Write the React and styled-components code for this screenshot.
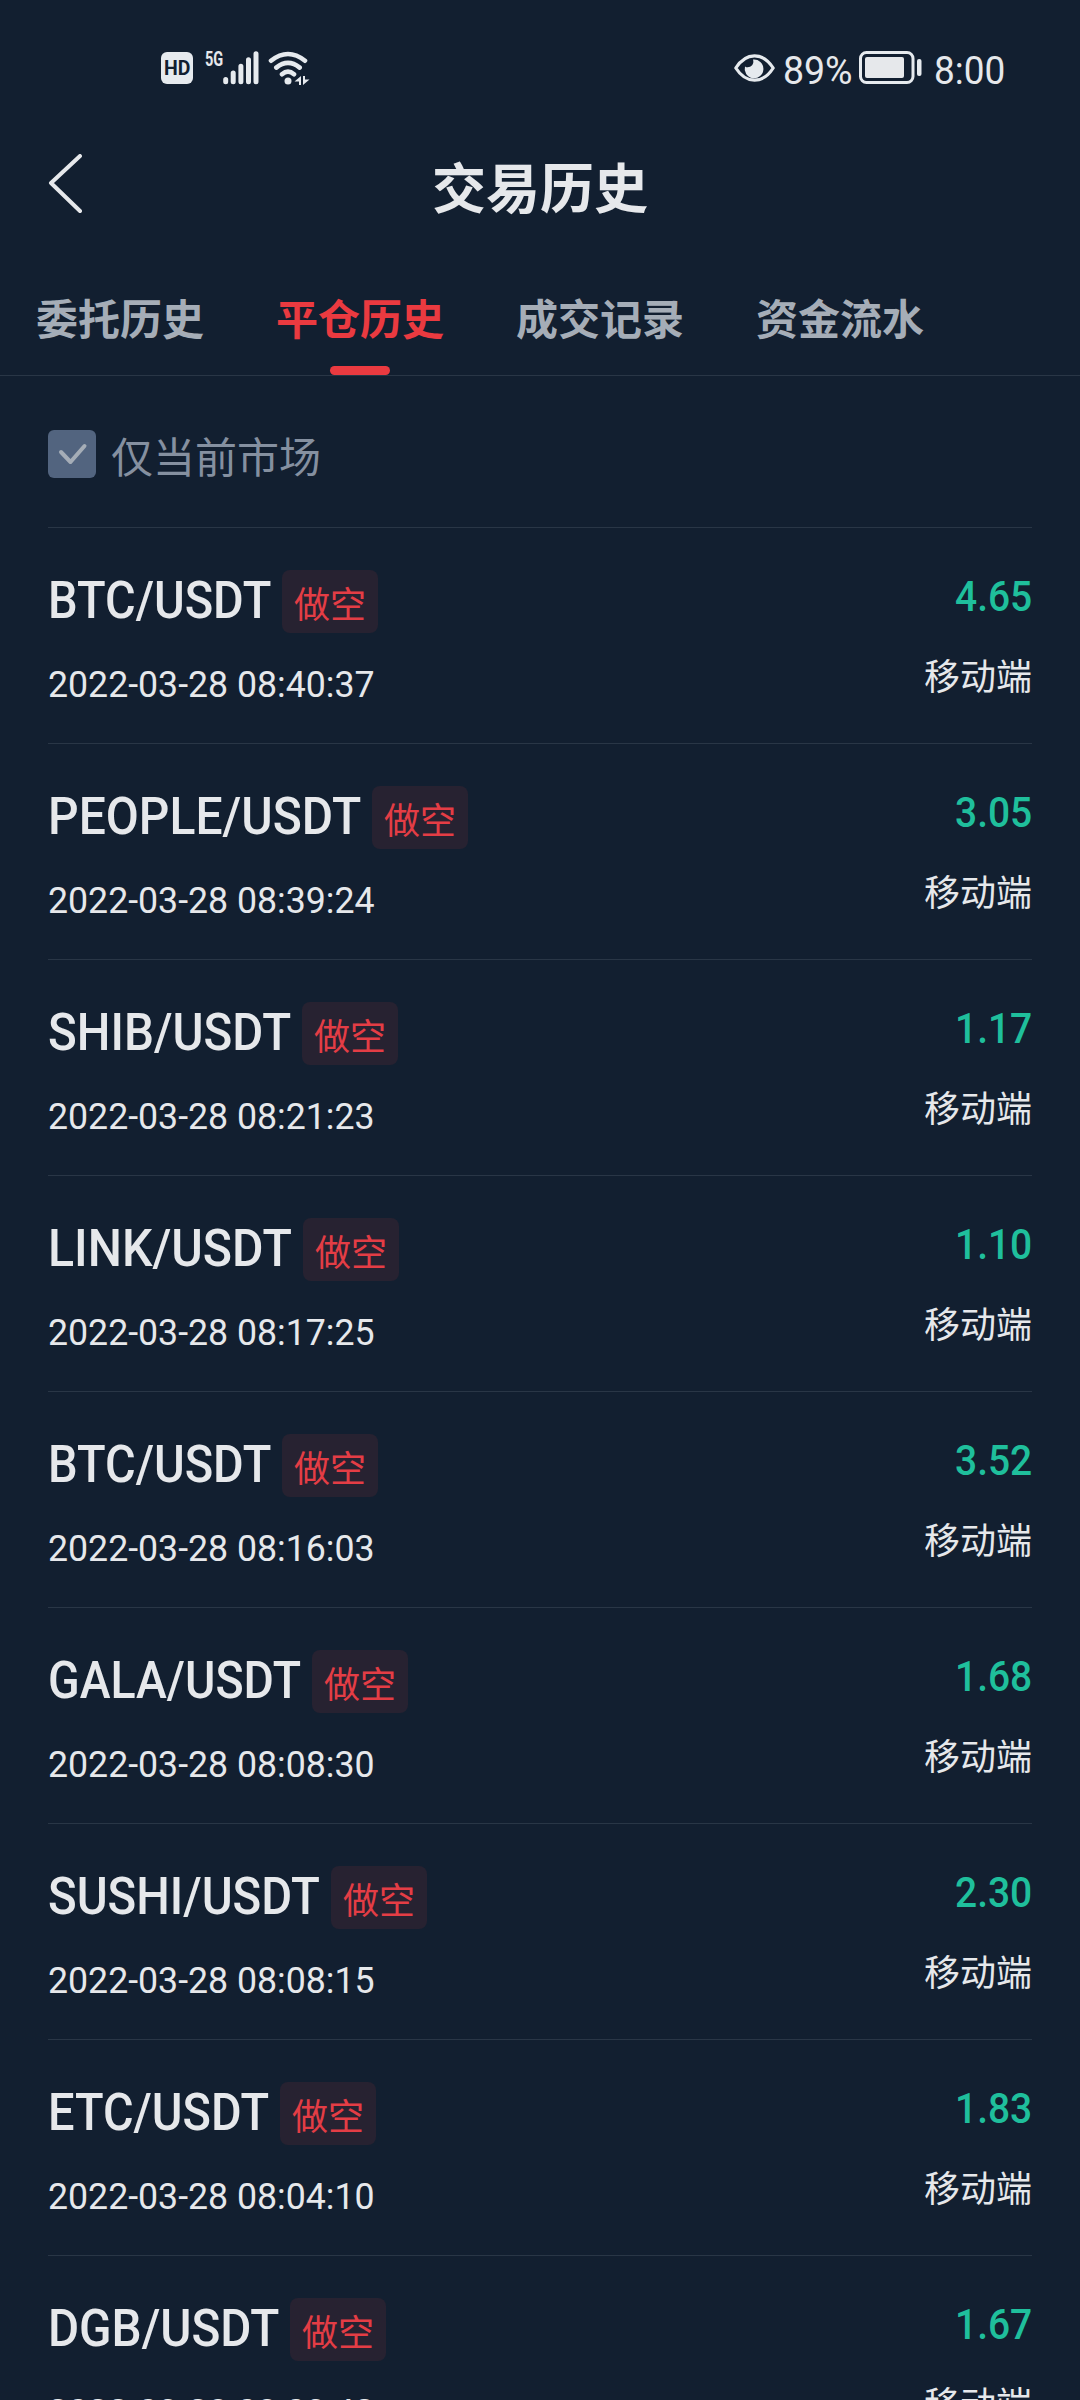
import React, { useLayoutEffect, useRef, useState } from 'react';
import styled, { createGlobalStyle } from 'styled-components';

const GlobalStyle = createGlobalStyle`
  * {
    box-sizing: border-box;
  }

  body {
    margin: 0;
    background: #121f30;
    color: #e6e8eb;
    font-family: Roboto, 'Noto Sans CJK SC', sans-serif;
  }
`

const Screen = styled.div`
  width: 1080px;
  height: 2400px;
  overflow: hidden;
  background: #121f30;
`

const FitBox = styled.span`
  display: block;
  width: ${props => props.$width}px;
  white-space: nowrap;
`

const FitText = styled.span`
  display: inline-block;
  transform-origin: left center;
`

// condenses a line of text to the given width
const Fit = ({ width, children }) => {
  const ref = useRef(null);
  const [scale, setScale] = useState(1);

  useLayoutEffect(() => {
    setScale(width / ref.current.offsetWidth);
  }, [width, children]);

  return (
    <FitBox $width={width}>
      <FitText ref={ref} style={{ transform: `scaleX(${scale})` }}>{children}</FitText>
    </FitBox>
  )
}

const StatusBar = styled.div`
  display: flex;
  justify-content: space-between;
  height: 136px;
  padding: 48px 75px 0 161px;
`

const StatusGroup = styled.div`
  display: flex;
  align-items: center;
  height: 40px;
`

const HdBadge = styled.div`
  width: 32px;
  height: 32px;
  padding-left: 3px;
  border-radius: 6px;
  background: #e6eaee;
  color: #121f30;
  font-size: 21px;
  font-weight: 700;
  line-height: 33px;
`

const NetworkType = styled.div`
  align-self: flex-start;
  margin-left: 12px;
  font-size: 21px;
  font-weight: 700;
  line-height: 22px;
`

const StatusText = styled.div`
  margin: 0 ${props => props.$after || '0'} 0 ${props => props.$before};
  padding-top: 5px;
  font-size: 38px;
  line-height: 40px;
`

const WifiSvg = styled.svg`
  margin-left: 9px;
`

const Header = styled.header`
  display: grid;
  grid-template-columns: 120px 1fr 120px;
  align-items: center;
  height: 100px;
`

const BackButton = styled.button`
  display: flex;
  height: 64px;
  padding: 0 0 0 44px;
  border: 0;
  background: none;
`

const Title = styled.h1`
  margin: 9px 0 0;
  font-size: 54px;
  font-weight: 700;
  line-height: 80px;
  text-align: center;
`

const Tabs = styled.nav`
  display: flex;
  height: 140px;
  border-bottom: 1px solid #293646;
`

const Tab = styled.div`
  display: flex;
  flex-direction: column;
  align-items: center;
  justify-content: space-between;
  width: 240px;
  padding-top: 55px;
  color: ${props => props.$active ? '#ea3a40' : '#a5adb7'};
  font-size: 42px;
  font-weight: 700;
  line-height: 60px;

  &::after {
    content: '';
    width: 60px;
    height: 9px;
    border-radius: 5px;
    background: ${props => props.$active ? '#ea3a40' : 'transparent'};
  }
`

const Filter = styled.div`
  display: flex;
  align-items: center;
  height: 152px;
  margin: 0 48px;
  padding-top: 5px;
  border-bottom: 1px solid #293646;
  color: #8590a0;
  font-size: 42px;
`

const Checkbox = styled.span`
  display: flex;
  width: 48px;
  height: 48px;
  margin-right: 15px;
  border-radius: 6px;
  background: #52647f;
`

const FilterLabel = styled.span`
  padding-top: 10px;
  line-height: 60px;
`

const Row = styled.div`
  display: flex;
  justify-content: space-between;
  height: 216px;
  margin: 0 48px;
  border-bottom: 1px solid #293646;
`

const Pair = styled.div`
  display: flex;
  height: 105px;
  padding-top: 42px;
`

const Symbol = styled.div`
  font-size: 52px;
  font-weight: 500;
  line-height: 61px;
`

const Side = styled.span`
  width: 96px;
  height: 63px;
  margin-left: 11px;
  border-radius: 8px;
  background: #272231;
  color: #e43d45;
  font-size: 36px;
  line-height: 73px;
  text-align: center;
`

const Time = styled.div`
  margin-top: 31px;
  font-size: 36px;
  line-height: 42px;
`

const Result = styled.div`
  display: flex;
  flex-direction: column;
  align-items: flex-end;
`

const Amount = styled.div`
  padding-top: 43px;
  color: #1fbf9c;
  font-size: 43px;
  font-weight: 500;
  line-height: 51px;
`

const Source = styled.div`
  margin-top: 30px;
  font-size: 36px;
  line-height: 52px;
`

const SignalIcon = () => (
  <svg width="36" height="34" viewBox="0 0 36 34" stroke="#e6eaee" strokeWidth="5" strokeLinecap="round">
    <path d="M2.7 28.5v2.3M10.2 22v8.8M17.9 15.3v15.5M25.5 8.8v22M33 2.8v28" />
  </svg>
)

const WifiIcon = () => (
  <WifiSvg width="42" height="35" viewBox="0 0 42 35" fill="none" stroke="#e6eaee" strokeWidth="4.6" strokeLinecap="round">
    <path d="M3 9.7Q20 -3.7 37 9.7M8.3 16.6Q20 7 31.7 16.6M14 23.2Q20 18 26 23.2" />
    <circle cx="20" cy="30" r="3.5" fill="#e6eaee" stroke="none" />
    <path d="M33 25v9h-2v-3.5h-4.5zM35 34v-9h2v3.5h4.5z" fill="#e6eaee" stroke="none" />
  </WifiSvg>
)

const EyeIcon = () => (
  <svg width="41" height="28" viewBox="0 0 41 28">
    <path d="M1.8 14C7 5.8 13 1.8 20.5 1.8S34 5.8 39.2 14C34 22.2 28 26.2 20.5 26.2S7 22.2 1.8 14z" fill="none" stroke="#e6eaee" strokeWidth="3.2" strokeLinejoin="round" />
    <path d="M19 5.6a9.4 9.4 0 1 1-8 6.8c3.2 2.6 10-.6 8-6.8z" fill="#e6eaee" />
  </svg>
)

const BatteryIcon = () => (
  <svg width="63" height="34" viewBox="0 0 63 34">
    <rect x="1.5" y="1.5" width="52.5" height="30" rx="6" fill="none" stroke="#e6eaee" strokeWidth="3" />
    <rect x="6" y="6" width="39" height="21" rx="2" fill="#e6e8eb" />
    <rect x="58" y="8" width="4.5" height="17" rx="2" fill="#e6eaee" />
  </svg>
)

const tabs = ['委托历史', '平仓历史', '成交记录', '资金流水']

const trades = [
  { symbol: 'BTC/USDT', width: 223, time: '08:40:37', amount: '4.65' },
  { symbol: 'PEOPLE/USDT', width: 313, time: '08:39:24', amount: '3.05' },
  { symbol: 'SHIB/USDT', width: 243, time: '08:21:23', amount: '1.17' },
  { symbol: 'LINK/USDT', width: 244, time: '08:17:25', amount: '1.10' },
  { symbol: 'BTC/USDT', width: 223, time: '08:16:03', amount: '3.52' },
  { symbol: 'GALA/USDT', width: 253, time: '08:08:30', amount: '1.68' },
  { symbol: 'SUSHI/USDT', width: 272, time: '08:08:15', amount: '2.30' },
  { symbol: 'ETC/USDT', width: 221, time: '08:04:10', amount: '1.83' },
  { symbol: 'DGB/USDT', width: 231, time: '08:03:42', amount: '1.67' },
]

const Trade = ({ symbol, width, time, amount }) => (
  <Row>
    <div>
      <Pair>
        <Symbol><Fit width={width}>{symbol}</Fit></Symbol>
        <Side>做空</Side>
      </Pair>
      <Time><Fit width={327}>{`2022-03-28 ${time}`}</Fit></Time>
    </div>
    <Result>
      <Amount><Fit width={77}>{amount}</Fit></Amount>
      <Source>移动端</Source>
    </Result>
  </Row>
)

const App = () => (
  <Screen>
    <GlobalStyle />
    <StatusBar>
      <StatusGroup>
        <HdBadge><Fit width={26}>HD</Fit></HdBadge>
        <NetworkType><Fit width={18}>5G</Fit></NetworkType>
        <SignalIcon />
        <WifiIcon />
      </StatusGroup>
      <StatusGroup>
        <EyeIcon />
        <StatusText $before="8px" $after="6px"><Fit width={70}>89%</Fit></StatusText>
        <BatteryIcon />
        <StatusText $before="12px"><Fit width={71}>8:00</Fit></StatusText>
      </StatusGroup>
    </StatusBar>
    <Header>
      <BackButton aria-label="返回">
        <svg width="40" height="64" viewBox="0 0 40 64" fill="none" stroke="#e6e8eb" strokeWidth="4" strokeLinecap="round" strokeLinejoin="round">
          <path d="M36 2L7 29L36 57" />
        </svg>
      </BackButton>
      <Title>交易历史</Title>
    </Header>
    <Tabs>
      {tabs.map((label, i) => <Tab key={label} $active={i === 1}>{label}</Tab>)}
    </Tabs>
    <Filter>
      <Checkbox>
        <svg width="48" height="48" viewBox="0 0 48 48" fill="none" stroke="#a5adb7" strokeWidth="4" strokeLinecap="round" strokeLinejoin="round">
          <path d="M13 22l9.500 10 14-16" />
        </svg>
      </Checkbox>
      <FilterLabel>仅当前市场</FilterLabel>
    </Filter>
    {trades.map(trade => <Trade key={trade.time} {...trade} />)}
  </Screen>
)

export default App;
